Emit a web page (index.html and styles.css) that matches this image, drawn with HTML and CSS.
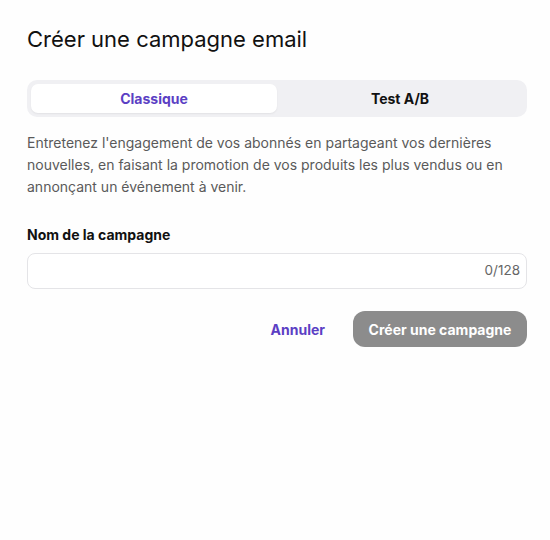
FILE: index.html
```html
<!DOCTYPE html>
<html lang="fr">
<head>
    <meta charset="UTF-8">
    <meta name="viewport" content="width=device-width, initial-scale=1.0">
    <title>Créer une campagne email</title>
    <link rel="stylesheet" href="styles.css">
</head>
<body>
<div class="modal">
    <h1 class="modal-title">Créer une campagne email</h1>

    <div class="tabs">
        <button class="tab active">Classique</button>
        <button class="tab">Test A/B</button>
    </div>

    <p class="description">
        Entretenez l'engagement de vos abonnés en partageant vos dernières
        nouvelles, en faisant la promotion de vos produits les plus vendus ou en
        annonçant un événement à venir.
    </p>

    <div class="form-group">
        <label for="campaign-name">Nom de la campagne</label>
        <div class="input-wrap">
            <input type="text" id="campaign-name" class="form-control" maxlength="128">
            <span class="counter">0/128</span>
        </div>
    </div>

    <div class="actions">
        <button class="btn-link">Annuler</button>
        <button class="btn-primary" disabled>Créer une campagne</button>
    </div>
</div>
</body>
</html>
```

FILE: styles.css
```css
:root {
    --bg-color: #fefefe;
    --primary: #5b3fc4;
    --text: #111111;
    --text-secondary: #5a5a5a;
    --tab-bg: #f0f0f3;
    --border: #e4e4e7;
}

* {
    margin: 0;
    padding: 0;
    box-sizing: border-box;
    font-family: 'Inter', 'Liberation Sans', sans-serif;
}

body {
    background-color: var(--bg-color);
    color: var(--text);
}

.modal {
    width: 500px;
    margin-left: 27px;
    padding-top: 25px;
}

.modal-title {
    font-size: 22px;
    font-weight: 400;
    line-height: 28px;
    margin-bottom: 27px;
}

.tabs {
    display: flex;
    background-color: var(--tab-bg);
    border-radius: 10px;
    padding: 4px;
    height: 37px;
}

.tab {
    flex: 1;
    border: none;
    background: none;
    border-radius: 7px;
    font-size: 14px;
    font-weight: 700;
    color: var(--text);
    cursor: pointer;
}

.tab.active {
    background-color: #fff;
    color: var(--primary);
    box-shadow: 0 1px 2px rgba(0, 0, 0, 0.06);
}

.description {
    margin-top: 15px;
    font-size: 14px;
    line-height: 22px;
    color: var(--text-secondary);
}

.form-group {
    margin-top: 27px;
}

.form-group label {
    display: block;
    font-size: 14px;
    font-weight: 700;
    line-height: 20px;
    margin-bottom: 8px;
}

.input-wrap {
    position: relative;
}

.form-control {
    width: 100%;
    height: 36px;
    padding: 0 60px 0 12px;
    background-color: #fff;
    border: 1px solid var(--border);
    border-radius: 8px;
    font-size: 14px;
    color: var(--text);
}

.form-control:focus {
    outline: none;
    border-color: var(--primary);
}

.counter {
    position: absolute;
    right: 7px;
    top: 9px;
    font-size: 13.5px;
    color: #666;
}

.actions {
    display: flex;
    justify-content: flex-end;
    align-items: center;
    gap: 28px;
    margin-top: 22px;
}

.btn-link {
    background: none;
    border: none;
    color: var(--primary);
    font-size: 14px;
    font-weight: 700;
    cursor: pointer;
}

.btn-primary {
    width: 174px;
    height: 36px;
    background-color: #8c8c8c;
    color: #fff;
    border: none;
    border-radius: 12px;
    font-size: 14px;
    font-weight: 700;
}
```
